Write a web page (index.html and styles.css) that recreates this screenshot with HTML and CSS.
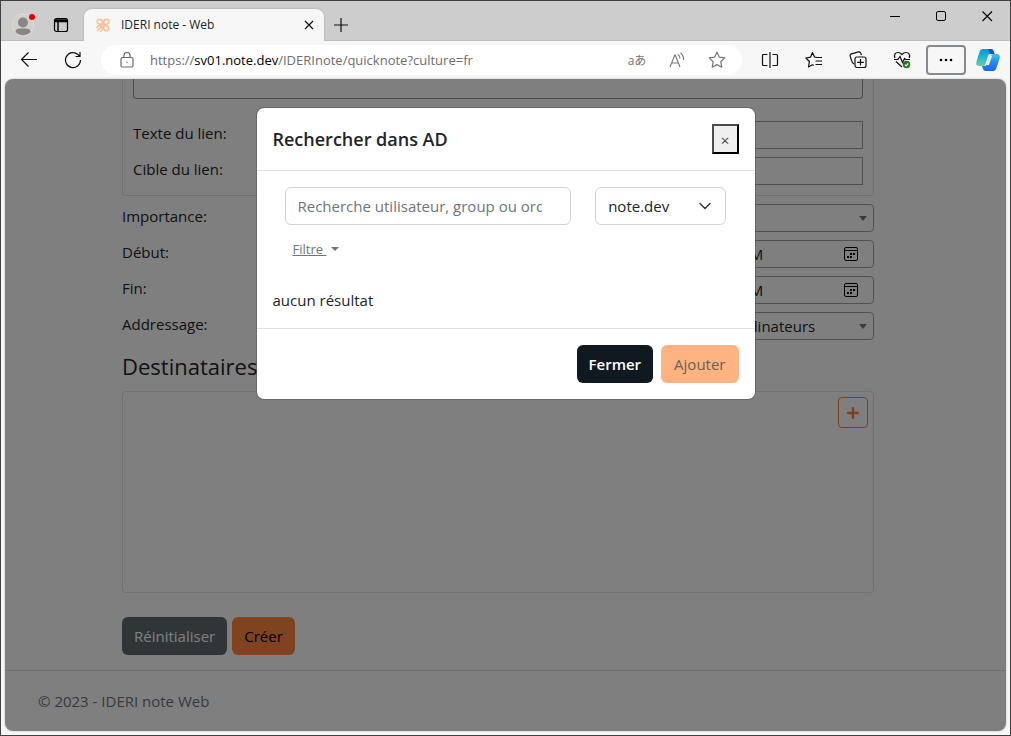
FILE: index.html
```html
<!DOCTYPE html>
<html lang="fr">
<head>
<meta charset="utf-8">
<title>IDERI note - Web</title>
<link rel="stylesheet" href="styles.css">
</head>
<body>
<div class="window">
  <header class="titlebar">
    <button class="profile" aria-label="Profil">
      <svg width="24" height="24" viewBox="0 0 24 24"><circle cx="12" cy="12" r="11" fill="#d3d0cc" stroke="#dedbd7"/><circle cx="12" cy="9.500" r="5" fill="#8a8683"/><path d="M4.500 19c0-2.500 2-3.500 4-3.500h7c2 0 4 1 4 3.500a10.500 10.500 0 0 1-15 0z" fill="#8a8683"/><circle cx="21" cy="4" r="3" fill="#e60000"/></svg>
    </button>
    <button class="workspaces" aria-label="Onglets">
      <svg width="16" height="16" viewBox="0 0 16 16" fill="none" stroke="#000"><rect x="1.500" y="1.500" width="13" height="13" rx="2" stroke-width="1.200"/><path d="M2 3h12M2 4.500h12M5 5v9.500" stroke-width="1.500"/></svg>
    </button>
    <div class="tab">
      <svg width="14" height="14" viewBox="0 0 14 14" fill="none" stroke="#fbbd97" stroke-width="1.500"><path d="M6.200 6.200H3.500a2.500 2.500 0 1 1 2.700-2.700zM7.800 6.200V3.500a2.500 2.500 0 1 1 2.700 2.700zM7.800 7.800h2.700a2.500 2.500 0 1 1-2.700 2.700zM6.200 7.800v2.700a2.500 2.500 0 0 1-2.500 2.700M6.200 7.800H3.500A2.500 2.500 0 0 0 1 10.300M1 13l5-5"/></svg>
      <span class="tab-title">IDERI note - Web</span>
      <button class="tab-close" aria-label="Fermer l'onglet"><svg width="10" height="10" viewBox="0 0 10 10" stroke="#111" stroke-width="1.200"><path d="M1 1l8 8M9 1L1 9"/></svg></button>
    </div>
    <button class="new-tab" aria-label="Nouvel onglet"><svg width="14" height="14" viewBox="0 0 14 14" stroke="#111" stroke-width="1.200"><path d="M7 0v14M0 7h14"/></svg></button>
    <div class="controls">
      <button aria-label="Réduire"><svg width="11" height="11" viewBox="0 0 11 11" stroke="#000"><path d="M0 5.500h10"/></svg></button>
      <button aria-label="Agrandir"><svg width="11" height="11" viewBox="0 0 11 11" fill="none" stroke="#000"><rect x=".5" y=".5" width="9" height="9" rx="1.500"/></svg></button>
      <button aria-label="Quitter"><svg width="11" height="11" viewBox="0 0 11 11" stroke="#000" stroke-width="1.100"><path d="M.5.5l9.500 9.500M10 .5L.5 10"/></svg></button>
    </div>
  </header>
  <nav class="toolbar">
    <button class="tool" aria-label="Retour"><svg width="18" height="18" viewBox="0 0 18 18" fill="none" stroke="#111" stroke-width="1.200"><path d="M17 8.500H1.500M8.500 1.500l-7 7 7 7"/></svg></button>
    <button class="tool" aria-label="Actualiser"><svg width="18" height="18" viewBox="0 0 18 18" fill="none" stroke="#111" stroke-width="1.200"><path d="M16.500 9A7.500 7.500 0 1 1 14 3.500l2 2M16 1v4.500h-4.500"/></svg></button>
    <div class="address">
      <svg class="lock" width="14" height="16" viewBox="0 0 14 16" fill="none" stroke="#6a6a6a" stroke-width="1.200"><rect x="1" y="5.500" width="12" height="9.500" rx="1.500"/><path d="M4 5.500V3.500a3 3 0 0 1 6 0v2"/><circle cx="7" cy="10.200" r=".7" fill="#6a6a6a" stroke="none"/></svg>
      <span class="url">https://<b>sv01.note.dev</b>/IDERInote/quicknote?culture=fr</span>
      <button class="in-address translate" aria-label="Traduire">aあ</button>
      <button class="in-address" aria-label="Lecture à voix haute"><svg width="18" height="16" viewBox="0 0 18 16" fill="none" stroke="#777" stroke-width="1.100"><path d="M2 15L6.800 3h.4L12 15M3.700 11h6.600M10 2.500a5 5 0 0 1 2 4M12.500 1a8 8 0 0 1 3 7"/></svg></button>
      <button class="in-address" aria-label="Favori"><svg width="18" height="18" viewBox="0 0 18 18" fill="none" stroke="#777" stroke-width="1.200" stroke-linejoin="round"><path d="M9 1.200l2.400 5 5.400.7-4 3.800 1 5.500L9 13.600l-4.800 2.600 1-5.500-4-3.800 5.400-.7z"/></svg></button>
    </div>
    <div class="tools">
      <button class="tool" aria-label="Fractionner"><svg width="18" height="16" viewBox="0 0 18 16" fill="none" stroke="#111" stroke-width="1.200"><path d="M6.500 2.500h-4Q1.500 2.500 1.500 3.500v9q0 1 1 1h4M11.500 2.500h4q1 0 1 1v9q0 1-1 1h-4M9 0v16"/></svg></button>
      <button class="tool" aria-label="Favoris"><svg width="18" height="18" viewBox="0 0 18 18" fill="none" stroke="#111" stroke-width="1.200" stroke-linejoin="round"><path d="M12 6.500L9.500 6 7.500 1.500l-2 4.700-4.600.8 3.500 3.500-.9 5.500 4-2.200 1.300.7M10.500 6.500H17M10.500 10H17M10.500 13.500H17"/></svg></button>
      <button class="tool" aria-label="Collections"><svg width="18" height="18" viewBox="0 0 18 18" fill="none" stroke="#111" stroke-width="1.200"><rect x="6" y="6" width="11" height="10.500" rx="2"/><path d="M11.500 8v6.500M8.200 11.300h6.600M5 13C3 12 2.700 10.500 2 8L1.200 5.200c-.3-1.200.3-2 1.300-2.300l7-2c1-.2 2 .3 2.300 1.300l.6 2"/></svg></button>
      <button class="tool" aria-label="Performances"><svg width="18" height="18" viewBox="0 0 18 18" fill="none" stroke="#111" stroke-width="1.200"><path d="M2 7C.5 3.500 2.500 1.500 5 1.500c2 0 3 .8 4 2 1-1.200 2-2 4-2 2.500 0 4.500 2 3.200 5.500M1 8.500h4L7 5.500l2.500 6 2-4 1 1H17M3 10.500l6 5.500"/><circle cx="13.500" cy="13.500" r="3.700" fill="#168016" stroke="none"/><path d="M11.900 13.600l1.200 1.200 2.100-2.300" stroke="#fff"/></svg></button>
    </div>
    <button class="more" aria-label="Paramètres"><svg width="14" height="4" viewBox="0 0 14 4"><circle cx="2" cy="2" r="1.300"/><circle cx="7" cy="2" r="1.300"/><circle cx="12" cy="2" r="1.300"/></svg></button>
    <button class="copilot" aria-label="Copilot">
      <svg width="24" height="24" viewBox="0 0 24 24"><defs><linearGradient id="ga" x1="0" y1="0" x2="0" y2="1"><stop offset="0" stop-color="#1391dc"/><stop offset=".5" stop-color="#22b6dc"/><stop offset="1" stop-color="#63d78c"/></linearGradient><linearGradient id="gb" x1="0" y1="0" x2="0" y2="1"><stop offset="0" stop-color="#39c5f0"/><stop offset=".5" stop-color="#2b88ef"/><stop offset="1" stop-color="#1769df"/></linearGradient></defs><path d="M7 1h8q2 0 2.600 2l1 3h-4q-2 0-2.600 2l-2.500 8q-.7 2-2.700 2H3Q-.5 18 .5 13.500L3.500 4Q4.500 1 7 1z" fill="url(#ga)"/><path d="M12 1h3q2 0 2.600 2l1 3H15q-1.500-.2-2-2z" fill="#1556b5"/><path d="M17.500 6H21q3.500 0 2.600 4.500l-3 9Q19.600 23 17 23H9.500q-2 0-2.500-2l-1-3h2q2.500 0 3.200-2l2.700-8q.7-2 3.600-2z" fill="url(#gb)"/><path d="M14.200 7.500h2l-3.300 9.500h-2.300z" fill="#f7f7f7"/></svg>
    </button>
  </nav>

  <div class="viewport">
    <main class="page">
      <form class="container">
        <div class="link-box">
          <textarea class="message" aria-label="Message"></textarea>
          <div class="row"><label for="link-text">Texte du lien:</label><input class="field square" id="link-text" type="text"></div>
          <div class="row"><label for="link-target">Cible du lien:</label><input class="field square" id="link-target" type="text"></div>
        </div>
        <div class="rows">
          <div class="row"><label for="importance">Importance:</label><div class="pick"><select class="field" id="importance"><option></option></select></div></div>
          <div class="row"><label for="start">Début:</label><div class="date"><input class="field" id="start" type="text" value="9/12/2023 1:38 PM"><svg width="14" height="14" viewBox="0 0 14 14" fill="none" stroke="#000"><rect x=".5" y=".5" width="13" height="13" rx="1.500"/><path d="M1 3.500h12"/><path d="M6 7h5M3 10h5" stroke-width="2" stroke-dasharray="2 1"/></svg></div></div>
          <div class="row"><label for="end">Fin:</label><div class="date"><input class="field" id="end" type="text" value="9/13/2023 1:38 PM"><svg width="14" height="14" viewBox="0 0 14 14" fill="none" stroke="#000"><rect x=".5" y=".5" width="13" height="13" rx="1.500"/><path d="M1 3.500h12"/><path d="M6 7h5M3 10h5" stroke-width="2" stroke-dasharray="2 1"/></svg></div></div>
          <div class="row"><label for="target">Addressage:</label><div class="pick"><select class="field" id="target"><option>Utilisateurs et ordinateurs</option></select></div></div>
        </div>
        <h2 class="section">Destinataires:</h2>
        <div class="recipients"><button type="button" class="add" aria-label="Ajouter un destinataire"><svg width="12" height="12" viewBox="0 0 12 12" stroke="currentColor" stroke-width="2.400" stroke-linecap="round"><path d="M6 1.200v9.600M1.200 6h9.600"/></svg></button></div>
        <div class="actions"><button type="reset" class="btn gray">Réinitialiser</button><button type="submit" class="btn orange">Créer</button></div>
      </form>
      <footer class="footer">© 2023 - IDERI note Web</footer>
    </main>
    <div class="backdrop">
      <section class="modal" role="dialog" aria-labelledby="modal-title">
        <header class="modal-header"><h1 id="modal-title">Rechercher dans AD</h1><button class="close" aria-label="Fermer la fenêtre">×</button></header>
        <div class="modal-body">
          <div class="search">
            <div class="cell"><input class="control query" type="text" aria-label="Recherche" placeholder="Recherche utilisateur, group ou ordinateur"></div>
            <div class="cell domain"><select class="control" aria-label="Domaine"><option>note.dev</option></select><svg width="12" height="8" viewBox="0 0 12 8" fill="none" stroke="#343a40" stroke-width="1.500" stroke-linecap="round" stroke-linejoin="round"><path d="M1 1.500l5 5 5-5"/></svg></div>
          </div>
          <button class="filter"><span>Filtre&nbsp;</span></button>
          <p class="result">aucun résultat</p>
        </div>
        <footer class="modal-footer"><button class="btn dark">Fermer</button><button class="btn orange" disabled>Ajouter</button></footer>
      </section>
    </div>
  </div>
</div>
</body>
</html>
```
FILE: styles.css
```css
* { box-sizing: border-box; }
body {
  margin: 0;
  font: 15px/24px "Open Sans", "Noto Sans", sans-serif;
  color: #212529;
}
button, input, select, textarea { font: inherit; color: inherit; }
button { margin: 0; padding: 0; border: 0; background: none; }
h1, h2, p { margin: 0; }
svg { display: block; }

.window {
  display: flex;
  flex-direction: column;
  height: 100vh;
  border: 1px solid #414141;
  background: #f7f7f7;
}

.titlebar {
  display: flex;
  flex: none;
  height: 40px;
  padding-left: 10px;
  background: #cdcdcd;
  box-shadow: inset 0 -1px #bdbdbd;
}
.profile { width: 26px; padding-top: 8px; }
.workspaces { width: 32px; margin-right: 15px; padding: 8px 0 0 16px; }
.tab {
  display: flex;
  align-items: center;
  gap: 11px;
  width: 240px;
  margin-top: 8px;
  padding: 0 10px 0 12px;
  border-radius: 8px 8px 0 0;
  background: #f7f7f7;
  box-shadow: 0 0 2px #999;
  clip-path: inset(-3px -3px 0 -3px);
}
.tab-title { flex: 1; font-size: 12px; }
.new-tab { padding: 8px 10px 0; }
.controls { display: flex; align-items: flex-start; margin-left: auto; }
.controls button { display: grid; place-items: center; width: 46px; height: 30px; }

.toolbar {
  display: flex;
  flex: none;
  align-items: center;
  height: 38px;
  padding: 0 10px 0 6px;
}
.tool { display: grid; flex: none; place-items: center; width: 44px; height: 30px; }
.address {
  display: flex;
  flex: 1;
  align-items: center;
  min-width: 0;
  height: 30px;
  margin: 0 6px;
  padding: 0 5px 0 19px;
  border-radius: 15px;
  background: #fff;
}
.lock { margin-right: 16px; }
.url {
  flex: 1;
  overflow: hidden;
  color: #6e6e6e;
  font-size: 13px;
  white-space: nowrap;
}
.url b { color: #000; font-weight: 400; }
.in-address { display: grid; place-items: center; width: 40px; height: 30px; color: #777; }
.translate { font: 12px "Open Sans", "Noto Sans CJK JP", sans-serif; }
.tools { display: flex; }
.more {
  display: grid;
  place-items: center;
  width: 40px;
  height: 30px;
  margin: 0 10px 0 2px;
  border: 2px solid #858a90;
  border-radius: 4px;
}

.viewport {
  position: relative;
  flex: 1;
  margin: 0 4px 4px;
  overflow: hidden;
  border-radius: 8px;
  background: #fff;
  box-shadow: 0 0 2px #aaa;
}
.container {
  max-width: 752px;
  margin: 0 auto;
}
.page { padding-right: 15px; }
.link-box {
  display: grid;
  gap: 8px;
  padding: 0 10px 10px;
  border: 1px solid #dee2e6;
  border-top: 0;
  border-radius: 0 0 4px 4px;
}
.message {
  width: 100%;
  height: 20px;
  margin-bottom: 14px;
  border: 1px solid #999;
  border-top: 0;
  border-radius: 0 0 4px 4px;
  background: none;
  resize: none;
}
.rows { display: grid; gap: 8px; margin-top: 8px; }
.row { display: grid; grid-template-columns: 2fr 1fr; }
.field {
  width: 100%;
  height: 28px;
  padding: 0 8px;
  border: 1px solid #a0a0a0;
  border-radius: 4px;
  background: none;
  appearance: none;
}
.square { border-radius: 0; }
.pick, .date { position: relative; }
.pick::after {
  position: absolute;
  top: 12px;
  right: 7px;
  border: 4px solid transparent;
  border-top: 5px solid #777;
  border-bottom: 0;
  content: "";
}
.date svg { position: absolute; top: 7px; right: 16px; }
.section { margin-top: 11px; font-size: 22px; font-weight: 400; line-height: 30px; }
.recipients {
  display: flex;
  align-items: flex-start;
  justify-content: flex-end;
  height: 202px;
  margin-top: 10px;
  padding: 5px;
  border: 1px solid #dee2e6;
  border-radius: 4px;
}
.add {
  display: grid;
  place-items: center;
  width: 30px;
  height: 31px;
  border: 1px solid #fd7e3c;
  border-radius: 4px;
  color: #fd7e3c;
}
.actions { display: flex; gap: 5px; margin-top: 24px; }
.btn { height: 38px; padding: 0 12px; border-radius: 6px; }
.gray { background: #616a70; color: #fff; }
.orange { background: #ff873e; color: #000; }
.orange:disabled { padding: 0 13px; background: #ffb382; color: #666157; }
.dark { background: #101820; color: #fff; font-weight: 600; }
.footer {
  margin: 15px -15px 0 0;
  padding: 18px 33px;
  border-top: 1px solid #dee2e6;
  color: #6c757d;
}

.backdrop { position: absolute; inset: 0; background: rgba(0, 0, 0, .5); }
.modal {
  width: 500px;
  max-width: calc(100% - 16px);
  margin: 28px auto;
  border: 1px solid rgba(0, 0, 0, .18);
  border-radius: 8px;
  background: #fff;
  background-clip: padding-box;
}
.modal-header {
  display: flex;
  align-items: center;
  justify-content: space-between;
  padding: 16px;
  border-bottom: 1px solid #dee2e6;
}
.modal-header h1 { font-size: 18px; font-weight: 600; line-height: 30px; }
.close {
  width: 27px;
  height: 30px;
  border: 2px solid;
  border-color: #4c4c4c #000 #000 #4c4c4c;
  background: #efefef;
  color: #444;
  font-size: 15px;
  line-height: 28px;
}
.modal-body { padding: 16px; }
.search { display: grid; grid-template-columns: 2fr 1fr; }
.cell { min-width: 0; padding: 0 12px; }
.control {
  width: 100%;
  height: 38px;
  padding: 0 12px;
  border: 1px solid #ced4da;
  border-radius: 6px;
  background: #fff;
  appearance: none;
}
.query { padding-right: 28px; }
.query::placeholder { color: #6c757d; }
.domain { position: relative; }
.domain svg { position: absolute; top: 15px; right: 27px; }
.filter {
  display: flex;
  align-items: center;
  gap: 5px;
  margin: 8px 20px 0;
  color: #6c757d;
  font-size: 13px;
  line-height: 32px;
}
.filter span { text-decoration: underline; }
.filter::after { border: 4px solid transparent; border-top-color: currentColor; border-bottom: 0; content: ""; }
.result { margin-top: 23px; }
.modal-footer {
  display: flex;
  justify-content: flex-end;
  gap: 8px;
  padding: 16px;
  border-top: 1px solid #dee2e6;
}
```
